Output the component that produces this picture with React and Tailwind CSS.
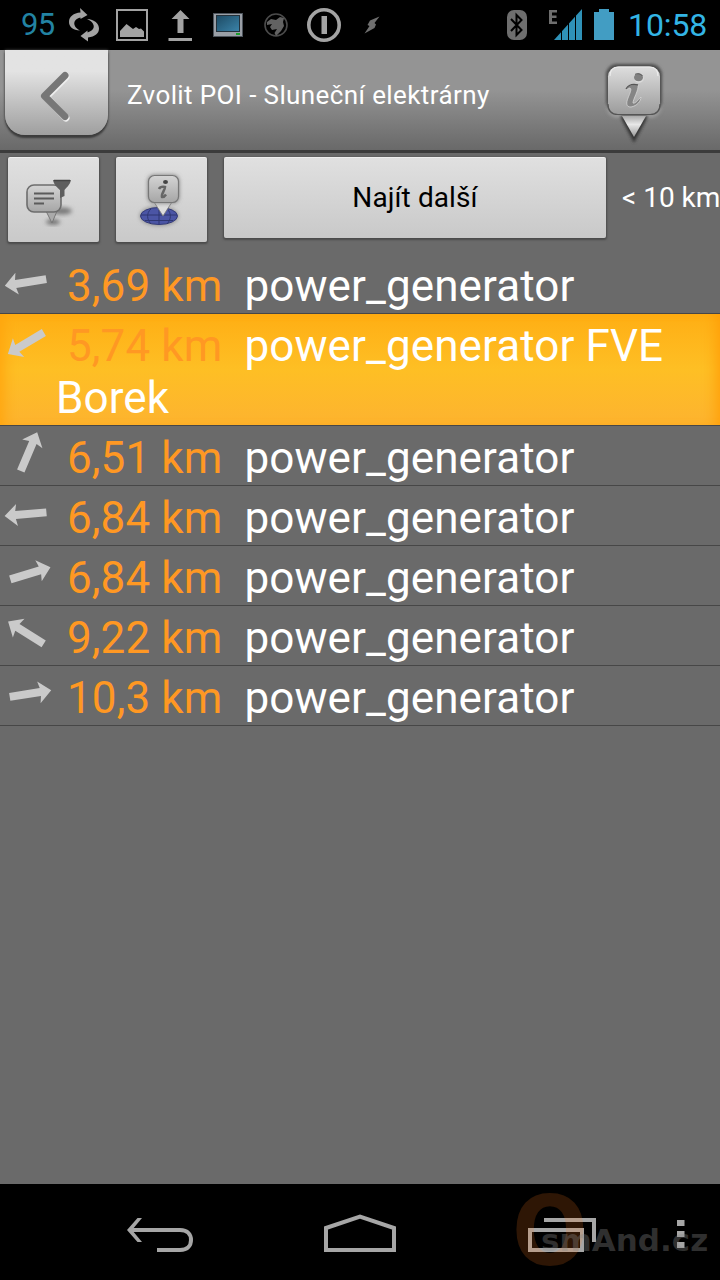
const POIS = [
  { distance: '3,69 km', name: 'power_generator', angle: 171 },
  { distance: '5,74 km', name: 'power_generator FVE Borek', angle: 149, selected: true },
  { distance: '6,51 km', name: 'power_generator', angle: -67 },
  { distance: '6,84 km', name: 'power_generator', angle: 175 },
  { distance: '6,84 km', name: 'power_generator', angle: -17 },
  { distance: '9,22 km', name: 'power_generator', angle: -148 },
  { distance: '10,3 km', name: 'power_generator', angle: -9 },
];

// Every notification icon sits in a 48px slot
function Slot({ children }) {
  return (
    <svg width="48" height="50" viewBox="0 0 48 50" className="shrink-0">
      {children}
    </svg>
  );
}

function StatusBar() {
  return (
    <div className="flex h-[50px] items-center bg-black pl-3">
      <div className="w-12 pl-[9px] text-[31px] leading-[50px] tracking-[-0.6px] text-[#2283a3]">95</div>
      <Slot>
        <g fill="#a3a3a3">
          <path d="M20 8 L27.500 15 L20.500 19 L20.500 17.500 C15.500 18.500 13.500 22 14.500 25 C15.500 28 17.500 29 20 30.500 C13 30.500 9 26.500 9 22 C9 16.500 13.500 13 20.500 12.500 Z" />
          <path d="M28 41.500 L20.500 36 L27.500 30.500 L27.500 32.500 C32.500 31 34.500 28 33.500 25 C32.500 22 30.500 20.500 27 19 C34.500 19.500 39 23.500 39 28.500 C39 33.500 35 36.500 28 37.500 Z" />
        </g>
      </Slot>
      <Slot>
        <rect x="9" y="10" width="30" height="30" fill="none" stroke="#a3a3a3" strokeWidth="2" />
        <path d="M12 37 V31 L18.500 24 L25 29 L28 27 L31 29 L33 28.500 L36 31.500 V37 Z" fill="#a3a3a3" />
      </Slot>
      <Slot>
        <path d="M24.500 10 L33.500 19 H27.500 V33 H21.500 V19 H15.500 Z M12.500 38 H36 V41 H12.500 Z" fill="#a3a3a3" />
      </Slot>
      <Slot>
        <defs>
          <linearGradient id="screen" x1="0" y1="0" x2="1" y2="1">
            <stop offset="0" stopColor="#1d4a63" />
            <stop offset="1" stopColor="#3b84aa" />
          </linearGradient>
        </defs>
        <rect x="9.500" y="13.500" width="29" height="23" fill="#9a9fa6" stroke="#4d545c" />
        <rect x="12.500" y="15.500" width="23" height="16" fill="url(#screen)" stroke="#24323c" />
        <rect x="32" y="33" width="4" height="2" fill="#1b9d2d" />
      </Slot>
      <Slot>
        <circle cx="24" cy="25" r="11" fill="none" stroke="#4b4b4b" strokeWidth="1.600" />
        <path d="M15 22 L19 19 L24 20 L28 17 L32 18 L31 22 L32 26 L29 31 L24 36 L22.500 33 L25 29 L20 30 L18 27 L20 24 L15 25 Z" fill="#626262" />
      </Slot>
      <Slot>
        <circle cx="24" cy="25" r="15.200" fill="none" stroke="#a3a3a3" strokeWidth="3.600" />
        <rect x="21.500" y="16" width="5.500" height="18" fill="#a3a3a3" />
      </Slot>
      <Slot>
        <path d="M31.500 16.500 L22 20.500 L19.500 25 L21.500 26 L16.500 33.500 L26.500 28 L28 24.500 L26.500 23 Z" fill="#6f6f6f" />
      </Slot>
      <div className="ml-auto flex items-center pr-3">
        <svg width="20" height="50" viewBox="0 0 20 50">
          <rect y="10" width="20" height="30" rx="7" fill="#6e6e6e" />
          <path d="M4 19 L14.500 30 L9.500 35 V15 L14.500 20 L4 31" fill="none" stroke="#000" strokeWidth="2" />
        </svg>
        <svg width="67" height="50" viewBox="0 0 67 50" className="ml-[21px]">
          <path d="M1 10 H9 V12.500 H4 V15.500 H8.500 V18 H4 V21.500 H9 V24 H1 Z" fill="#6e6e6e" />
          <path d="M34 9 V40 H6 Z" fill="#2f92b8" />
          <path d="M13.500 10 V40 M20.500 10 V40 M27.500 10 V40" stroke="#000" strokeWidth="1" />
          <path d="M46 12 H51 V9 H61 V12 H66 V40 H46 Z" fill="#429dc3" />
        </svg>
        <span className="ml-[13px] w-[80px] whitespace-nowrap text-[32px] leading-[52px] tracking-[-0.1px] text-[#33b5e5]">10:58</span>
      </div>
    </div>
  );
}

function InfoPin() {
  return (
    <svg width="76" height="92" viewBox="0 0 76 92">
      <defs>
        <linearGradient id="pin" x1="0" y1="0" x2="0" y2="1">
          <stop offset="0" stopColor="#dedede" />
          <stop offset="1" stopColor="#9b9b9b" />
        </linearGradient>
        <linearGradient id="tip" x1="0" y1="0" x2="0" y2="1">
          <stop offset="0" stopColor="#aaa" />
          <stop offset="0.400" stopColor="#e8e8e8" />
          <stop offset="1" stopColor="#999" />
        </linearGradient>
        <filter id="soft" x="-30%" y="-30%" width="160%" height="160%">
          <feGaussianBlur stdDeviation="1.500" />
        </filter>
      </defs>
      <rect x="10" y="14" width="56" height="48" rx="12" fill="#999" filter="url(#soft)" />
      <rect x="10" y="8" width="56" height="48" rx="11" fill="#4c4c4c" filter="url(#soft)" />
      <path d="M24 60 L38 87 L52 60 Z" fill="#333" filter="url(#soft)" />
      <path d="M26 60 L38 81 L50 60 Z" fill="url(#tip)" />
      <rect x="12" y="10.500" width="52" height="48" rx="10" fill="url(#pin)" />
      <path d="M12 48 Q12 58.500 22 58.500 H54 Q64 58.500 64 48" fill="none" stroke="#555" strokeWidth="1.200" />
      <path d="M14 20 Q14 11 23 11 H53 Q62 11 62 20" fill="none" stroke="#ececec" strokeWidth="1.200" />
      <ellipse cx="43" cy="22.500" rx="4.800" ry="4.300" fill="#dadada" />
      <ellipse cx="42.500" cy="21.500" rx="4.500" ry="3.800" fill="#808080" />
      <path d="M39 18.500 C41 17 45 17.500 46.500 20" fill="none" stroke="#555" />
      <path d="M30 33 C33 28 38 28 42 29 C43 34 37 43 37 47 C39 48 42 44 45 41 C45 45 41 50 35 51 C30 51 30 47 32 42 C34 37 36 33 34 32 C32 32 31 34 30 33 Z" fill="#858585" stroke="#d6d6d6" strokeWidth="0.800" />
      <path d="M30 33 C33 28 38 28 42 29" fill="none" stroke="#555" strokeWidth="1.300" />
    </svg>
  );
}

function Header() {
  return (
    <div className="flex h-[103px] items-start border-b-[3px] border-[#3b3b3b] bg-linear-to-b from-[#949494] from-40% to-[#696969] pl-[5px]">
      <button className="flex h-[85px] w-[103px] items-center justify-center rounded-b-[20px] bg-linear-to-b from-[#e3e3e3] from-25% to-[#9f9f9f] shadow-[0_3px_2px_#3c3c3c,0_0_3px_#555]">
        <svg width="103" height="85" viewBox="0 0 103 85">
          <g fill="none" strokeLinecap="round" strokeLinejoin="round">
            <path d="M61 27 L41 47 L61 68" stroke="#eee" strokeWidth="7" />
            <path d="M60 25.500 L39.500 46 L60 66.500" stroke="#777" strokeWidth="7" />
          </g>
        </svg>
      </button>
      <h1 className="ml-[19px] whitespace-nowrap text-[26px] leading-[90px] tracking-[0.39px] text-white">Zvolit POI - Sluneční elektrárny</h1>
      <div className="ml-auto mr-12 pt-1.5">
        <InfoPin />
      </div>
    </div>
  );
}

const BUTTON =
  'flex items-center justify-center rounded-[2px] border-t border-[#eee] bg-linear-to-b from-[#e0e0e0] to-[#c9c9c9] shadow-[0_1px_2px_1px_#4b4b4b]';

function Toolbar() {
  return (
    <div className="flex h-[101px] items-start pl-2 pt-1">
      <button className={`${BUTTON} h-[85px] w-[91px] shrink-0`}>
        <svg width="91" height="84" viewBox="0 0 91 84">
          <defs>
            <linearGradient id="bubble" x1="0" y1="0" x2="0" y2="1">
              <stop offset="0" stopColor="#d4d4d4" />
              <stop offset="1" stopColor="#a6a6a6" />
            </linearGradient>
            <filter id="haze" x="-50%" y="-50%" width="200%" height="200%">
              <feGaussianBlur stdDeviation="2" />
            </filter>
          </defs>
          <ellipse cx="54" cy="53" rx="10" ry="3.500" fill="#777" filter="url(#haze)" />
          <ellipse cx="45" cy="64" rx="7" ry="2.500" fill="#666" filter="url(#haze)" />
          <path d="M38 53 L44 65 L49 53 Z" fill="#aaa" stroke="#777" />
          <rect x="19" y="27" width="34" height="27" rx="7" fill="url(#bubble)" stroke="#6d6d6d" strokeWidth="1.600" />
          <path d="M26 35.500 H46 M26 40.500 H46 M26 45.500 H36" stroke="#5b5b5b" strokeWidth="1.800" />
          <path d="M45 22 H63 C62 27 58 30 56.500 32 V38 L52 40 V32 C49 29 46 27 45 22 Z" fill="#5e5e5e" />
          <path d="M46 22.500 H62" stroke="#444" strokeWidth="1.500" />
        </svg>
      </button>
      <button className={`${BUTTON} ml-[17px] h-[85px] w-[91px] shrink-0`}>
        <svg width="91" height="84" viewBox="0 0 91 84">
          <ellipse cx="43" cy="58" rx="19" ry="9.500" fill="#888" filter="url(#haze)" />
          <ellipse cx="43" cy="58" rx="18.500" ry="8.500" fill="#4b55a5" stroke="#343b78" />
          <path d="M25 57 H61 M29 62.500 H57 M43 50 V66 M35 51 C30 55 31 62 35 66 M51 51 C56 55 55 62 51 66" fill="none" stroke="#2e3671" strokeWidth="1" />
          <path d="M38 44 L47 58 L56 44 Z" fill="#ddd" stroke="#777" strokeWidth="0.800" />
          <rect x="32" y="17" width="31" height="28" rx="6" fill="#777" filter="url(#haze)" />
          <rect x="32.500" y="17.500" width="30" height="27" rx="6" fill="url(#bubble)" stroke="#777" strokeWidth="1.200" />
          <ellipse cx="49.500" cy="24" rx="2.500" ry="2" fill="#444" />
          <path d="M43 31 C44 29 46 28.500 49 29 C49 32 45 36 46 39 C48 39.500 49 38 50 36.500" fill="none" stroke="#666" strokeWidth="2.500" />
        </svg>
      </button>
      <button className={`${BUTTON} ml-[17px] h-[81px] w-[382px] shrink-0 text-[28px] tracking-[0.1px] text-black`}>Najít další</button>
      <span className="ml-4 whitespace-nowrap text-[28px] leading-[82px] text-white">&lt; 10 km</span>
    </div>
  );
}

function DirectionArrow({ angle }) {
  return (
    <svg width="56" height="56" viewBox="0 0 56 56" className="shrink-0">
      <path
        d="M-18.500 -4 H12.500 L11 -11 L23.500 0 L11 11 L12.500 4 H-18.500 Z"
        fill="#cacaca"
        transform={`translate(28 28) rotate(${angle})`}
      />
    </svg>
  );
}

function PoiRow({ poi }) {
  return (
    <li
      className={`flex items-start border-b border-[#474747] ${
        poi.selected
          ? 'bg-linear-to-b from-[#ffae13] via-[#febf24] to-[#fdb32f] shadow-[inset_12px_0_14px_-8px_#ffa50d,inset_-12px_0_14px_-8px_#ff9f08]'
          : ''
      }`}
    >
      <DirectionArrow angle={poi.angle} />
      <p className="flex-1 whitespace-pre-wrap pb-px pt-1.5 text-[44px] leading-[52px] tracking-[0.1px] text-white">
        <span className="text-[#ff9823]">{`\u00a0${poi.distance}`}</span>
        {`  ${poi.name}`}
      </p>
    </li>
  );
}

function NavBar() {
  return (
    <div className="relative h-24 shrink-0 bg-black">
      <svg width="720" height="96" viewBox="0 0 720 96" fill="none" stroke="#a6a6a6" strokeWidth="4">
        <path d="M130 46 H180 C188 46 191 51 191 56 C191 61 188 66 180 66 H157" />
        <path d="M142 34 H137.500 L127 46 L137.500 58 H142 L132 46 Z" fill="#a6a6a6" stroke="none" />
        <path d="M326 44 L360 32.500 L394 44 V66 H326 Z" />
        <rect x="530" y="46" width="52" height="20" />
        <path d="M544 36 H594 V58" />
        <path d="M677 36 H684.500 V42 H677 Z M677 47 H684.500 V53 H677 Z M677 58 H684.500 V64 H677 Z" fill="#a6a6a6" stroke="none" />
      </svg>
      {/* watermark over the navigation keys */}
      <div className="absolute inset-0 font-['DejaVu_Sans',sans-serif] font-bold">
        <span className="absolute left-[512px] top-0 origin-left scale-x-[0.93] text-[96px] leading-[96px] text-[#ff7a1a]/18">O</span>
        <span className="absolute left-[541px] top-9 text-[31px] leading-10 text-[#8a8a8a]/35">smAnd.cz</span>
      </div>
    </div>
  );
}

export default function App() {
  return (
    <div className="flex h-[1280px] w-[720px] flex-col overflow-hidden bg-[#6a6a6a] font-[Roboto,sans-serif]">
      <StatusBar />
      <Header />
      <Toolbar />
      <ul className="flex-1">
        {POIS.map((poi, i) => (
          <PoiRow key={i} poi={poi} />
        ))}
      </ul>
      <NavBar />
    </div>
  );
}
